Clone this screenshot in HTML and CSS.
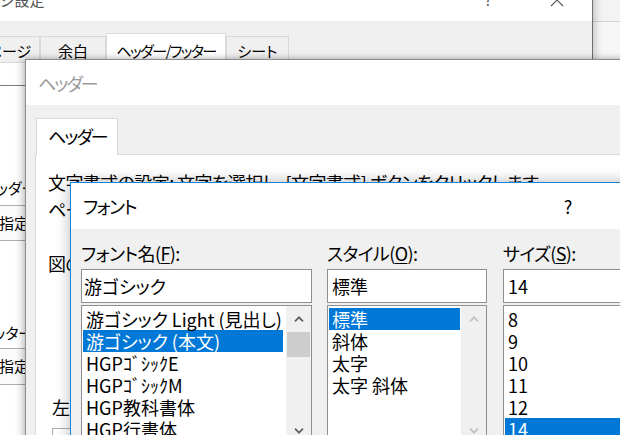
FILE: index.html
```html
<!DOCTYPE html>
<html lang="ja">
<head>
<meta charset="utf-8">
<title>フォント</title>
<link rel="stylesheet" href="styles.css">
</head>
<body>
<div class="desk">
  <div class="win back">
    <div class="back-title"></div>
  </div>

  <div class="win setup">
    <div class="setup-title">
      <span class="title-text">ページ設定</span>
      <span class="setup-help">?</span>
      <span class="setup-close">
        <svg width="14" height="14" viewBox="0 0 14 14"><path d="M1 1 L13 13 M13 1 L1 13" stroke="#555" stroke-width="1.1" fill="none"/></svg>
      </span>
    </div>
    <div class="setup-body">
      <div class="setup-tabs">
        <div class="stab t1">ページ</div>
        <div class="stab t2">余白</div>
        <div class="stab t3 sel">ヘッダー/フッター</div>
        <div class="stab t4">シート</div>
      </div>
      <div class="setup-panel">
        <div class="rule"></div>
        <div class="slabel first">ヘッダー(A):</div>
        <div class="sdrop">(指定しない)</div>
        <div class="slabel second">フッター(F):</div>
        <div class="sdrop tall">(指定しない)</div>
      </div>
    </div>
  </div>

  <div class="win hdr">
    <div class="hdr-title">ヘッダー</div>
    <div class="hdr-body">
      <div class="hdr-tabs">
        <div class="htab">ヘッダー</div>
      </div>
      <div class="hdr-panel">
        <p class="line">文字書式の設定: 文字を選択し、[文字書式] ボタンをクリックします。</p>
        <p class="line">ページ番号、日付、時刻、ファイル パス、ファイル名、またはシート見出しを挿入する場合は、挿入ポイントを編集ボックスに移動し、適切なボタンをクリックします。</p>
        <p class="line gap">図の挿入: [図の挿入] ボタンをクリックします。</p>
        <div class="sect-label">左側(L):</div>
        <div class="sect-box"></div>
      </div>
    </div>
  </div>

  <div class="win font">
    <div class="font-title">
      <span class="title-text">フォント</span>
      <span class="font-help">?</span>
      <span class="font-close"></span>
    </div>
    <div class="font-body">
      <div class="col c1">
        <div class="flabel">フォント名(<u>F</u>):</div>
        <div class="finput in1">游ゴシック</div>
        <div class="flist">
          <div class="items pad-fonts">
            <div class="item">游ゴシック Light (見出し)</div>
            <div class="item sel">游ゴシック (本文)</div>
            <div class="item">HGPｺﾞｼｯｸE</div>
            <div class="item">HGPｺﾞｼｯｸM</div>
            <div class="item">HGP教科書体</div>
            <div class="item">HGP行書体</div>
          </div>
          <div class="sbar">
            <div class="sbtn"><svg width="10" height="6" viewBox="0 0 10 6"><path d="M1 5.3 L5 1.3 L9 5.3" fill="none" stroke="#606060" stroke-width="1.7"/></svg></div>
            <div class="thumb"></div>
            <div class="strack"></div>
            <div class="sbtn"><svg width="10" height="6" viewBox="0 0 10 6"><path d="M1 0.7 L5 4.7 L9 0.7" fill="none" stroke="#606060" stroke-width="1.7"/></svg></div>
          </div>
        </div>
      </div>
      <div class="col c2">
        <div class="flabel">スタイル(<u>O</u>):</div>
        <div class="finput in2">標準</div>
        <div class="flist">
          <div class="items pad-style">
            <div class="item sel">標準</div>
            <div class="item">斜体</div>
            <div class="item">太字</div>
            <div class="item">太字 斜体</div>
          </div>
          <div class="sbar">
            <div class="sbtn"><svg width="10" height="6" viewBox="0 0 10 6"><path d="M1 5.3 L5 1.3 L9 5.3" fill="none" stroke="#c2c2c2" stroke-width="1.7"/></svg></div>
            <div class="strack"></div>
            <div class="sbtn"><svg width="10" height="6" viewBox="0 0 10 6"><path d="M1 0.7 L5 4.7 L9 0.7" fill="none" stroke="#c2c2c2" stroke-width="1.7"/></svg></div>
          </div>
        </div>
      </div>
      <div class="col c3">
        <div class="flabel">サイズ(<u>S</u>):</div>
        <div class="finput in3">14</div>
        <div class="flist">
          <div class="items pad-size">
            <div class="item">8</div>
            <div class="item">9</div>
            <div class="item">10</div>
            <div class="item">11</div>
            <div class="item">12</div>
            <div class="item sel">14</div>
          </div>
        </div>
      </div>
    </div>
  </div>
</div>
</body>
</html>
```

FILE: styles.css
```css
* { box-sizing: border-box; margin: 0; padding: 0; }

html, body {
  width: 620px;
  height: 435px;
  overflow: hidden;
}

body {
  background: #f4f4f4;
  font-family: "Noto Sans CJK JP", "Noto Sans", sans-serif;
  font-feature-settings: "palt";
  color: #000;
}

.desk {
  position: relative;
  width: 620px;
  height: 435px;
  overflow: hidden;
}

.win {
  position: absolute;
  display: flex;
  flex-direction: column;
  background: #f0f0f0;
}
.win > * { flex-shrink: 0; }

/* window far behind, top right */
.back {
  left: 540px;
  top: -20px;
  width: 200px;
  height: 200px;
  background: #f7f7f7;
}
.back-title {
  height: 42px;
  background: #f3f3f3;
  border-bottom: 1px solid #d2d2d2;
}

/* ページ設定 */
.setup {
  left: -40px;
  top: -22px;
  width: 633px;
  height: 480px;
  border-right: 1px solid #707070;
  box-shadow: 3px 0 7px rgba(0, 0, 0, 0.18);
}
.setup-title {
  height: 43px;
  background: #fff;
  display: flex;
  align-items: center;
  font-size: 15px;
  color: #555;
}
.setup-title .title-text {
  flex: 1;
  padding-left: 10px;
}
.setup-help {
  width: 68px;
  text-align: center;
  font-size: 15px;
  color: #666;
}
.setup-close {
  width: 70px;
  display: flex;
  justify-content: center;
  align-items: center;
}
.setup-body {
  flex: 1 1 auto;
  min-height: 0;
  display: flex;
  flex-direction: column;
  overflow: hidden;
}
.setup-tabs {
  display: flex;
  align-items: flex-end;
  height: 41px;
  padding-left: 18px;
  flex-shrink: 0;
}
.stab {
  height: 26px;
  padding-top: 4px;
  line-height: 20px;
  font-size: 15px;
  text-align: center;
  border: 1px solid #d9d9d9;
  border-bottom: none;
  background: #f0f0f0;
  color: #000;
  white-space: nowrap;
}
.stab.sel {
  height: 29px;
  padding-top: 7px;
  background: #fff;
}
.t1 { width: 62px; }
.t2 { width: 66px; }
.t3 { width: 120px; letter-spacing: -1.6px; }
.t4 { width: 63px; }

.setup-panel {
  flex: 1 1 auto;
  background: #fff;
  border: 1px solid #d9d9d9;
  margin: 0 10px;
  padding: 22px 0 0 16px;
  display: flex;
  flex-direction: column;
  align-items: flex-start;
}
.rule {
  align-self: stretch;
  height: 1px;
  background: #7a7a7a;
  margin-left: -16px;
}
.slabel {
  font-size: 15px;
  line-height: 20px;
  height: 20px;
  margin-left: -6px;
  white-space: nowrap;
}
.slabel.first { margin-top: 92px; }
.slabel.second { margin-top: 82px; }
.sdrop {
  margin-top: 7px;
  width: 300px;
  height: 36px;
  border: 1px solid #adadad;
  background: #fbfbfb;
  padding-left: 6px;
  line-height: 34px;
  font-size: 15px;
  white-space: nowrap;
}
.sdrop.tall {
  margin-top: 5px;
  height: 37px;
}

/* ヘッダー dialog */
.hdr {
  left: 25px;
  top: 59px;
  width: 640px;
  height: 420px;
  border: 1px solid #8c8c8c;
  box-shadow: -3px 0 8px rgba(0, 0, 0, 0.2), 0 -1px 5px rgba(0, 0, 0, 0.12);
}
.hdr-title {
  height: 45px;
  background: #fff;
  padding-left: 12px;
  display: flex;
  align-items: center;
  font-size: 18px;
  letter-spacing: -2px;
  color: #9a9a9a;
}
.hdr-body {
  flex: 1 1 auto;
  min-height: 0;
  overflow: hidden;
  padding: 13px 0 0 9px;
  display: flex;
  flex-direction: column;
}
.hdr-tabs {
  display: flex;
  position: relative;
  z-index: 1;
  flex-shrink: 0;
}
.htab {
  width: 82px;
  height: 37px;
  margin-left: 1px;
  background: #fff;
  border: 1px solid #d9d9d9;
  border-bottom: none;
  padding: 5px 0 0 11px;
  font-size: 18px;
  letter-spacing: -2px;
  line-height: 24px;
}
.hdr-panel {
  flex: 1 0 auto;
  margin-top: -1px;
  background: #fff;
  border: 1px solid #d9d9d9;
  padding: 14px 0 0 12px;
  overflow: hidden;
}
.line {
  font-size: 18px;
  line-height: 27px;
  letter-spacing: -0.6px;
  white-space: nowrap;
}
.line.gap { margin-top: 27px; }
.sect-label {
  margin: 119px 0 0 4px;
  font-size: 18px;
  line-height: 22px;
}
.sect-box {
  margin: 10px 0 0 4px;
  width: 200px;
  height: 100px;
  border: 1px solid #adadad;
  background: #fff;
}

/* フォント dialog */
.font {
  left: 70px;
  top: 182px;
  width: 600px;
  height: 300px;
  border: 1px solid #1883d7;
  box-shadow: 0 0 14px rgba(0, 0, 0, 0.28);
}
.font-title {
  height: 46px;
  background: #fff;
  display: flex;
  align-items: center;
  font-size: 18px;
}
.font-title .title-text {
  flex: 1;
  padding-left: 12px;
  letter-spacing: -1.5px;
}
.font-help {
  width: 46px;
  text-align: center;
  font-size: 18px;
}
.font-close {
  width: 78px;
}
.font-body {
  flex: 1 1 auto;
  min-height: 0;
  display: flex;
  padding: 13px 0 0 10px;
}
.col {
  display: flex;
  flex-direction: column;
  flex: none;
}
.c1 { width: 231px; }
.c2 { width: 160px; margin-left: 15px; }
.c3 { width: 150px; margin-left: 16px; }

.flabel {
  font-size: 18px;
  line-height: 22px;
  height: 22px;
  letter-spacing: -0.6px;
  white-space: nowrap;
}
.flabel u {
  text-decoration-thickness: 1px;
  text-underline-offset: 2px;
}
.finput {
  margin-top: 5px;
  height: 34px;
  border: 1px solid #8e8e8e;
  background: #fff;
  font-size: 18px;
  line-height: 32px;
  white-space: nowrap;
}
.in1 { padding-left: 2px; }
.in2 { padding-left: 4px; }
.in3 { padding-left: 4px; }

.flist {
  margin-top: 2px;
  height: 140px;
  border: 1px solid #8e8e8e;
  background: #fff;
  display: flex;
}
.items {
  flex: 1;
  padding-top: 2px;
  min-width: 0;
}
.pad-fonts { padding-left: 1px; padding-right: 3px; }
.pad-style { padding-left: 1px; padding-right: 1px; }
.pad-size { padding-left: 1px; }

.item {
  height: 22px;
  line-height: 22px;
  font-size: 18px;
  padding-left: 3px;
  white-space: nowrap;
}
.item.sel {
  background: #0078d7;
  color: #fff;
}

.sbar {
  width: 25px;
  background: #f0f0f0;
  display: flex;
  flex-direction: column;
}
.sbtn {
  height: 26px;
  display: flex;
  align-items: center;
  justify-content: center;
}
.thumb {
  height: 25px;
  margin: 0 1px;
  background: #cdcdcd;
}
.strack {
  flex: 1;
}
```
